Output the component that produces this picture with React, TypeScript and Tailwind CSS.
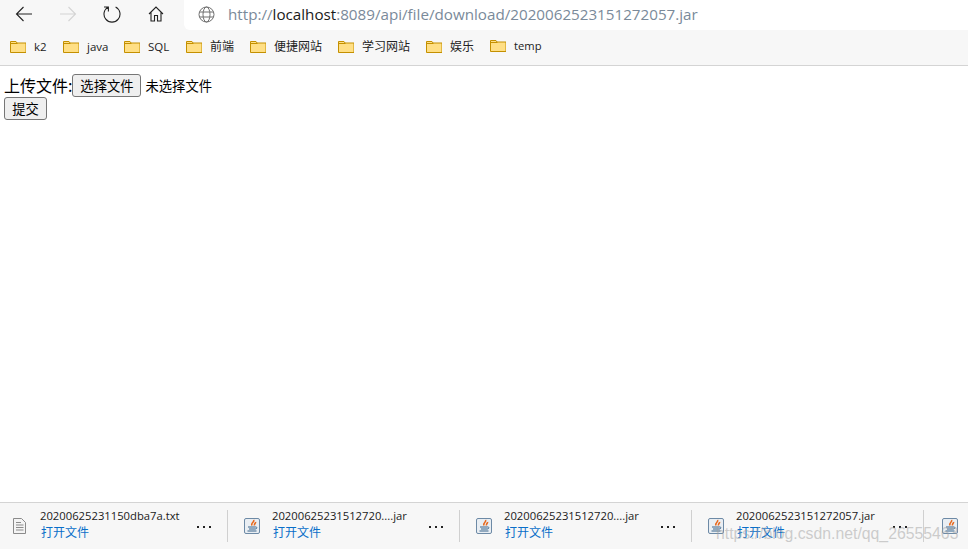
const FONT = "font-['Open_Sans','Noto_Sans_CJK_SC',sans-serif]";

function Folder() {
  return (
    <svg width="16" height="14" viewBox="0 0 16 14" className="shrink-0">
      <path d="M.5 12.5V1.5h5.500l1 1.500h9v9.500z" fill="#ffdf85" stroke="#c49000" strokeWidth="1" />
      <path d="M.5 3.500h7" stroke="#c49000" strokeWidth="1" fill="none" />
    </svg>
  );
}

function JarIcon() {
  return (
    <svg width="16" height="16" viewBox="0 0 16 16" className="shrink-0">
      <rect x=".5" y=".5" width="15" height="15" rx="1.500" fill="#e9eef3" stroke="#6d8aa6" />
      <path d="M9.500 2C11 4 6.500 4.500 8 7.500M11.500 4C12 5 10 5.500 10.500 7.500" stroke="#e8681c" strokeWidth="1.600" fill="none" />
      <path d="M4 9h7M5 11h6M3.500 13h9" stroke="#3a658c" strokeWidth="1.200" fill="none" />
      <path d="M11 9c2.500-.5 2.500 2 0 2" stroke="#3a658c" fill="none" />
    </svg>
  );
}

function TxtIcon() {
  return (
    <svg width="13" height="16" viewBox="0 0 13 16" className="shrink-0">
      <path d="M.5.500h8l4 4v11H.5z" fill="#f4f4f4" stroke="#8b8b8b" />
      <path d="M3 4.500h5M3 7h7.500M3 9.500h7.500M3 12h7.500" stroke="#8b8b8b" fill="none" />
    </svg>
  );
}

const bookmarks = [
  { name: "k2", w: "w-[53px]", t: "text-[11.500px]" },
  { name: "java", w: "w-[61px]", t: "text-[11.500px]" },
  { name: "SQL", w: "w-[62px]", t: "text-[11.500px]" },
  { name: "前端", w: "w-[64px]", t: "text-[12px]" },
  { name: "便捷网站", w: "w-[88px]", t: "text-[12px]" },
  { name: "学习网站", w: "w-[88px]", t: "text-[12px]" },
  { name: "娱乐", w: "w-[64px]", t: "text-[12px]" },
  { name: "temp", w: "w-[60px]", t: "text-[11.200px]" },
];

function DownloadItem({ name, txt }: { name: string; txt?: boolean }) {
  return (
    <div className="flex items-center w-[232px] h-[32px] border-r border-[#d0d0d0] shrink-0">
      <div className="w-[44px] pl-[3px] flex justify-center shrink-0">{txt ? <TxtIcon /> : <JarIcon />}</div>
      <div className="flex-1 min-w-0 flex flex-col -mt-[2px]">
        <span className="text-[11.250px] leading-[16px] text-[#1a1a1a] whitespace-nowrap">{name}</span>
        <span className="text-[12px] leading-[18px] text-[#0a6fc9] pl-[1px]">打开文件</span>
      </div>
      <div className="w-[24px] mr-[11px] text-center shrink-0">
        <svg width="16" height="3" viewBox="0 0 16 3" className="inline-block">
          <rect x="1" y="0" width="2" height="2" fill="#222" />
          <rect x="7" y="0" width="2" height="2" fill="#222" />
          <rect x="13" y="0" width="2" height="2" fill="#222" />
        </svg>
      </div>
    </div>
  );
}

export default function App() {
  return (
    <div className={`relative w-[968px] h-[549px] bg-white overflow-hidden flex flex-col ${FONT}`}>
      <div className="h-[30px] bg-[#f7f7f7] flex shrink-0">
        <div className="w-[184px] flex items-center pb-[3px] text-[#222]">
          <svg width="18" height="16" viewBox="0 0 18 16" className="ml-[15px]">
            <path d="M17 8H1.500M8.500 1 1.500 8l7 7" stroke="#222" strokeWidth="1.100" fill="none" />
          </svg>
          <svg width="18" height="16" viewBox="0 0 18 16" className="ml-[26px]">
            <path d="M1 8h15.500M9.500 1l7 7-7 7" stroke="#d4d4d4" strokeWidth="1.100" fill="none" />
          </svg>
          <svg width="18" height="18" viewBox="0 0 18 18" className="ml-[26px]">
            <path d="M12.600 2a8 8 0 1 1-7.200 0M5.400 1.500V6.500M5.400 2H1" stroke="#222" strokeWidth="1.100" fill="none" />
          </svg>
          <svg width="16" height="16" viewBox="0 0 16 16" className="ml-[27px]">
            <path d="M1 8 8 1l7 7M3 6V15h3.500V9.500h3V15H13V6" stroke="#222" strokeWidth="1.100" fill="none" />
          </svg>
        </div>
        <div className="flex-1 bg-white rounded-bl-[6px] flex items-center pb-[2px]">
          <svg width="17" height="17" viewBox="0 0 17 17" className="ml-[14px]">
            <g stroke="#6f6f6f" strokeWidth="1" fill="none">
              <circle cx="8.500" cy="8.500" r="7.500" />
              <ellipse cx="8.500" cy="8.500" rx="3.500" ry="7.500" />
              <path d="M1.500 6h14M1.500 11h14" />
            </g>
          </svg>
          <span className="ml-[13px] text-[15.200px] text-[#7a8a9a] whitespace-nowrap leading-[28px]">
            http://<span className="text-[#1a1a1a]">localhost</span>:8089/api/file/download/2020062523151272057.jar
          </span>
        </div>
      </div>

      <div className="h-[36px] bg-[#f7f7f7] border-b border-[#d4d4d4] flex items-center pb-[2px] pl-[10px] shrink-0">
        {bookmarks.map((b) => (
          <div key={b.name} className={`flex items-center gap-[8px] ${b.w}`}>
            <Folder />
            <span className={`${b.t} text-[#222] whitespace-nowrap`}>{b.name}</span>
          </div>
        ))}
      </div>

      <div className="flex-1 pt-[8px] pl-[4px] text-black font-['Noto_Sans_CJK_SC',sans-serif]">
        <div className="flex items-center h-[23px]">
          <span className="text-[16px] leading-[23px]">上传文件:</span>
          <button className="h-[23px] w-[69px] text-[13.300px] bg-[#efefef] border border-[#767676] rounded-[3px] flex items-center justify-center">
            选择文件
          </button>
          <span className="text-[13.330px] ml-[4px]">未选择文件</span>
        </div>
        <button className="h-[23px] w-[43px] text-[13.300px] bg-[#efefef] border border-[#767676] rounded-[3px] flex items-center justify-center">
          提交
        </button>
      </div>

      <div className="h-[47px] bg-[#f7f7f7] border-t border-[#d4d4d4] flex items-center shrink-0">
        <div className="flex items-center -ml-[4px]">
          <DownloadItem name="20200625231150dba7a.txt" txt />
          <DownloadItem name="20200625231512720....jar" />
          <DownloadItem name="20200625231512720....jar" />
          <DownloadItem name="2020062523151272057.jar" />
          <div className="w-[50px] pl-[1px] flex justify-center"><JarIcon /></div>
        </div>
      </div>

      <span className="absolute left-[716px] top-[523px] text-[15.800px] leading-[22px] text-[#a0a0a0]/50 whitespace-nowrap font-['Liberation_Sans',sans-serif]">
        https://blog.csdn.net/qq_26555463
      </span>
    </div>
  );
}
